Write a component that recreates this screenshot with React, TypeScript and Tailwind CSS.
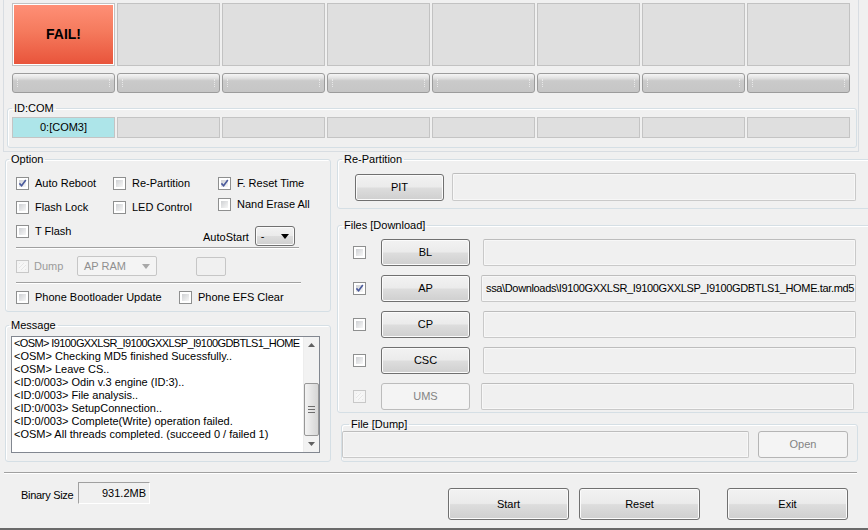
import clsx from "clsx";
import type { ReactNode } from "react";

const btnFace =
  "rounded-[3px] border border-[#707070] bg-[linear-gradient(#f2f2f2_0%,#ebebeb_48%,#dddddd_52%,#cfcfcf_100%)] shadow-[inset_0_0_0_1px_#fbfbfb]";

function Btn({ children, className, focus }: { children: ReactNode; className?: string; focus?: boolean }) {
  return (
    <div
      className={clsx(
        "flex items-center justify-center shrink-0",
        btnFace,
        focus && "border-[#3c9ee2] shadow-[inset_0_0_0_1px_#c6e8fb]",
        className
      )}
    >
      {children}
    </div>
  );
}

function Check({ checked, disabled }: { checked?: boolean; disabled?: boolean }) {
  return (
    <span
      className={clsx(
        "relative block w-[13px] h-[13px] shrink-0 border p-[2px]",
        disabled ? "border-[#c8c8c8] bg-[#f4f4f4]" : "border-[#8e8f8f] bg-white"
      )}
    >
      <span
        className={clsx(
          "block w-full h-full",
          disabled
            ? "bg-[repeating-linear-gradient(135deg,#e6e6e6_0px,#e6e6e6_1px,#f7f7f7_1px,#f7f7f7_3px)]"
            : "bg-[linear-gradient(135deg,#cfd1d4,#f7f7f7)]"
        )}
      />
      {checked && (
        <svg className="absolute left-0 top-0" width="11" height="11" viewBox="0 0 11 11">
          <path d="M2.4 5.4 L4.6 7.8 L8.8 2" fill="none" stroke="#4a5a9c" strokeWidth="1.6" />
        </svg>
      )}
    </span>
  );
}

function Opt({ label, checked, className }: { label: string; checked?: boolean; className?: string }) {
  return (
    <div className={clsx("flex items-center h-[13px]", className)}>
      <Check checked={checked} />
      <span className="ml-[6px] whitespace-nowrap">{label}</span>
    </div>
  );
}

function Field({ className, children }: { className?: string; children?: ReactNode }) {
  return (
    <div
      className={clsx(
        "shrink-0 flex items-center rounded-[2px] border border-[#c9c9c9] border-t-[#bdbdbd] bg-[#f0f0f0] shadow-[inset_0_0_0_1px_#f7f7f7] px-[4px] overflow-hidden whitespace-nowrap",
        className
      )}
    >
      {children}
    </div>
  );
}

function Legend({ children, className }: { children: ReactNode; className?: string }) {
  return <legend className={clsx("px-[2px] leading-[13px] text-[11px]", className)}>{children}</legend>;
}

const groupBox = "border border-[#d5dfe5] rounded-[3px] shadow-[inset_1px_1px_0_#ffffff]";

const messages = [
  "<OSM> I9100GXXLSR_I9100GXXLSP_I9100GDBTLS1_HOME",
  "<OSM> Checking MD5 finished Sucessfully..",
  "<OSM> Leave CS..",
  "<ID:0/003> Odin v.3 engine (ID:3)..",
  "<ID:0/003> File analysis..",
  "<ID:0/003> SetupConnection..",
  "<ID:0/003> Complete(Write) operation failed.",
  "<OSM> All threads completed. (succeed 0 / failed 1)",
];

const files = [
  { name: "BL", path: "", focus: true },
  { name: "AP", path: "ssa\\Downloads\\I9100GXXLSR_I9100GXXLSP_I9100GDBTLS1_HOME.tar.md5", checked: true },
  { name: "CP", path: "" },
  { name: "CSC", path: "" },
  { name: "UMS", path: "", disabled: true },
];

export default function App() {
  return (
    <div className="w-[868px] h-[530px] overflow-hidden bg-[#f0f0f0] text-[11px] text-black font-['Liberation_Sans',Arial,sans-serif] border-b-2 border-[#6a6a6a] flex flex-col">
      {/* device slots */}
      <div className="ml-[3px] w-[856px] h-[152px] shrink-0 border-x border-b border-[#d8dde2] pl-[8px] pt-[3px]">
        <div className="flex gap-[2px]">
          <div className="w-[103px] h-[63px] border border-[#c2c2c2] shadow-[inset_0_0_0_1px_#ffffff] bg-[linear-gradient(#ff9077_0%,#f57a5d_45%,#e8533a_100%)] flex items-center justify-center">
            <span className="text-[14px] font-bold">FAIL!</span>
          </div>
          {Array.from({ length: 7 }).map((_, i) => (
            <div key={i} className="w-[103px] h-[63px] border border-[#c2c2c2] bg-[#dfdfdf]" />
          ))}
        </div>
        <div className="mt-[7px] flex gap-[2px]">
          {Array.from({ length: 8 }).map((_, i) => (
            <div
              key={i}
              className="w-[103px] h-[20px] rounded-[3px] border border-[#9c9c9c] bg-[linear-gradient(#f5f5f5_0%,#e3e3e3_22%,#cacaca_38%,#c6c6c6_100%)] flex justify-between px-[4px] items-center"
            >
              <span className="w-px h-[8px] border-l border-dotted border-[#e8e8e8]" />
              <span className="w-px h-[8px] border-l border-dotted border-[#e8e8e8]" />
            </div>
          ))}
        </div>
        <fieldset className={clsx(groupBox, "-ml-[5px] mt-[9px] w-[850px] h-[46px]")}>
          <Legend className="ml-[4px]">ID:COM</Legend>
          <div className="pl-[4px] pt-[2px] flex gap-[2px]">
            <div className="w-[103px] h-[21px] border border-[#c4c4c4] bg-[#ade5e9] flex items-center justify-center">
              0:[COM3]
            </div>
            {Array.from({ length: 7 }).map((_, i) => (
              <div key={i} className="w-[103px] h-[21px] border border-[#c4c4c4] bg-[#dfdfdf]" />
            ))}
          </div>
        </fieldset>
      </div>

      {/* middle */}
      <div className="flex h-[310px] shrink-0">
        <div className="ml-[5px] w-[326px] shrink-0 flex flex-col">
          <fieldset className={clsx(groupBox, "mt-[1px] h-[159px]")}>
            <Legend className="ml-[3px]">Option</Legend>
            <div className="pl-[10px] pt-[11px]">
              <div className="flex">
                <Opt label="Auto Reboot" checked className="w-[97px]" />
                <Opt label="Re-Partition" className="w-[105px]" />
                <Opt label="F. Reset Time" checked />
              </div>
              <div className="flex mt-[11px]">
                <Opt label="Flash Lock" className="w-[97px]" />
                <Opt label="LED Control" className="w-[105px]" />
                <Opt label="Nand Erase All" className="-mt-[3px]" />
              </div>
              <div className="flex mt-[11px] h-[21px]">
                <Opt label="T Flash" className="w-[187px]" />
                <div className="flex items-center h-[20px] mt-[1px]">
                  <span className="mt-[2px]">AutoStart</span>
                  <div className={clsx(btnFace, "ml-[6px] w-[40px] h-[20px] flex items-center justify-between pl-[5px] pr-[5px]")}>
                    <span>-</span>
                    <svg width="8" height="5" viewBox="0 0 8 5">
                      <path d="M0 0 H8 L4 5 Z" fill="#000" />
                    </svg>
                  </div>
                </div>
              </div>
              <div className="mt-[1px] w-[283px] h-[2px] border-t border-[#a0a0a0] border-b border-b-white" />
              <div className="flex items-center mt-[7px] h-[20px]">
                <Check disabled />
                <span className="ml-[5px] w-[43px] text-[#9b9b9b]">Dump</span>
                <div className="w-[80px] h-[20px] rounded-[2px] border border-[#c6c6c6] bg-[#f4f4f4] flex items-center justify-between pl-[6px] pr-[6px] text-[#8f8f8f]">
                  <span>AP RAM</span>
                  <svg width="8" height="5" viewBox="0 0 8 5">
                    <path d="M0 0 H8 L4 5 Z" fill="#a8a8a8" />
                  </svg>
                </div>
                <div className="ml-[39px] w-[30px] h-[19px] rounded-[2px] border border-[#c6c6c6] bg-[#f0f0f0]" />
              </div>
              <div className="mt-[6px] w-[285px] h-[2px] border-t border-[#a0a0a0] border-b border-b-white" />
              <div className="flex mt-[7px]">
                <Opt label="Phone Bootloader Update" className="w-[163px]" />
                <Opt label="Phone EFS Clear" />
              </div>
            </div>
          </fieldset>

          <fieldset className={clsx(groupBox, "mt-[7px] h-[143px]")}>
            <Legend className="ml-[3px]">Message</Legend>
            <div className="pl-[5px] pt-[4px]">
              <div className="w-[309px] h-[117px] border border-[#828790] bg-white flex">
                <div className="flex-1 overflow-hidden pl-[2px] leading-[13px] text-[11px]">
                  {messages.map((m, i) => (
                    <div key={i} className={clsx("whitespace-nowrap", i === 0 && "tracking-[-0.6px]")}>
                      {m}
                    </div>
                  ))}
                </div>
                <div className="w-[16px] bg-[#f2f2f2] border-l border-[#ededed] flex flex-col items-center">
                  <div className="h-[16px] flex items-center justify-center">
                    <svg width="7" height="4" viewBox="0 0 7 4">
                      <path d="M0 4 L3.5 0 L7 4 Z" fill="#606060" />
                    </svg>
                  </div>
                  <div className="mt-[30px] w-[15px] h-[54px] rounded-[2px] border border-[#979797] bg-[linear-gradient(90deg,#f3f3f3,#e4e4e4_50%,#d6d6d6)] flex flex-col items-center justify-center gap-[2px]">
                    <span className="w-[7px] h-px bg-[#6d6d6d]" />
                    <span className="w-[7px] h-px bg-[#6d6d6d]" />
                    <span className="w-[7px] h-px bg-[#6d6d6d]" />
                  </div>
                  <div className="mt-auto h-[16px] flex items-center justify-center">
                    <svg width="7" height="4" viewBox="0 0 7 4">
                      <path d="M0 0 H7 L3.5 4 Z" fill="#606060" />
                    </svg>
                  </div>
                </div>
              </div>
            </div>
          </fieldset>
        </div>

        <div className="ml-[6px] w-[540px] shrink-0 flex flex-col">
          <fieldset className={clsx(groupBox, "mt-[1px] h-[56px]")}>
            <Legend className="ml-[4px]">Re-Partition</Legend>
            <div className="pl-[17px] pt-[7px] flex items-center">
              <Btn className="w-[89px] h-[27px] mt-[1px]">PIT</Btn>
              <Field className="ml-[8px] w-[404px] h-[28px]" />
            </div>
          </fieldset>

          <fieldset className={clsx(groupBox, "mt-[10px] h-[194px]")}>
            <Legend className="ml-[4px]">Files [Download]</Legend>
            <div className="pl-[15px] pt-[7px] flex flex-col gap-[9px]">
              {files.map((f) => (
                <div key={f.name} className="flex items-center h-[27px]">
                  <Check checked={f.checked} disabled={f.disabled} />
                  {f.disabled ? (
                    <div className="ml-[15px] w-[89px] h-[27px] shrink-0 rounded-[3px] border border-[#bcbcbc] bg-[#f4f4f4] flex items-center justify-center text-[#838383]">
                      {f.name}
                    </div>
                  ) : (
                    <Btn className="ml-[15px] w-[89px] h-[27px]" focus={f.focus}>
                      {f.name}
                    </Btn>
                  )}
                  <Field
                    className={clsx(
                      "h-[27px]",
                      f.name === "AP" ? "ml-[11px] w-[375px] tracking-[-0.35px]" : f.disabled ? "ml-[11px] w-[373px]" : "ml-[13px] w-[373px]"
                    )}
                  >
                    {f.path}
                  </Field>
                </div>
              ))}
            </div>
          </fieldset>

          <fieldset className={clsx(groupBox, "ml-[4px] mt-[5px] w-[517px] h-[44px]")}>
            <Legend className="ml-[7px]">File [Dump]</Legend>
            <div className="flex items-center">
              <Field className="w-[407px] h-[27px]" />
              <div className="ml-[9px] w-[90px] h-[27px] rounded-[3px] border border-[#b5b5b5] bg-[#f4f4f4] flex items-center justify-center text-[#838383]">
                Open
              </div>
            </div>
          </fieldset>
        </div>
      </div>

      {/* bottom */}
      <div className="ml-[4px] mt-[10px] w-[853px] h-[2px] shrink-0 border-t border-[#a0a0a0] border-b border-b-white" />
      <div className="flex items-start mt-[8px]">
        <span className="ml-[21px] mt-[5px] w-[57px] tracking-[-0.3px]">Binary Size</span>
        <div className="w-[72px] h-[22px] border border-[#a0a0a0] border-b-white border-r-white flex items-center justify-end pr-[3px]">
          931.2MB
        </div>
        <Btn className="ml-[298px] mt-[6px] w-[121px] h-[32px]">Start</Btn>
        <Btn className="ml-[10px] mt-[6px] w-[121px] h-[32px]">Reset</Btn>
        <Btn className="ml-[27px] mt-[6px] w-[121px] h-[32px]">Exit</Btn>
      </div>
    </div>
  );
}
